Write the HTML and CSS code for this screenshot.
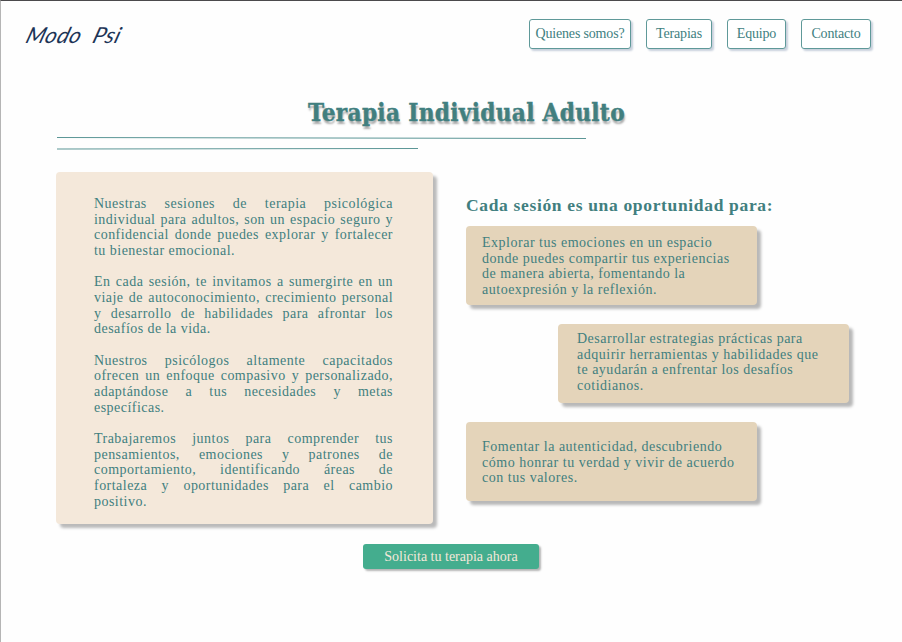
FILE: index.html
```html
<!DOCTYPE html>
<html lang="es">
<head>
<meta charset="utf-8">
<title>Modo Psi</title>
<link rel="stylesheet" href="styles.css">
</head>
<body>
<header class="header">
  <a class="logo"><span>Modo</span> <span>Psi</span></a>
  <nav class="nav">
    <a class="nav-somos"><span>Quienes somos?</span></a>
    <a class="nav-terapias"><span>Terapias</span></a>
    <a class="nav-equipo"><span>Equipo</span></a>
    <a class="nav-contacto"><span>Contacto</span></a>
  </nav>
</header>
<main>
  <h1>Terapia Individual Adulto</h1>
  <svg class="rules" width="532" height="16" viewBox="0 0 532 16" fill="none" stroke="#5b9696" stroke-width="1"><path d="M1 1.5L530 2.5M1 13L362 12.5"/></svg>
  <div class="columns">
    <section class="intro">
      <p>Nuestras sesiones de terapia psicológica<br>individual para adultos, son un espacio seguro y<br>confidencial donde puedes explorar y fortalecer<br><span class="last">tu bienestar emocional.</span></p>
      <p>En cada sesión, te invitamos a sumergirte en un<br>viaje de autoconocimiento, crecimiento personal<br>y desarrollo de habilidades para afrontar los<br><span class="last">desafíos de la vida.</span></p>
      <p>Nuestros psicólogos altamente capacitados<br>ofrecen un enfoque compasivo y personalizado,<br>adaptándose a tus necesidades y metas<br><span class="last">específicas.</span></p>
      <p>Trabajaremos juntos para comprender tus<br>pensamientos, emociones y patrones de<br>comportamiento, identificando áreas de<br>fortaleza y oportunidades para el cambio<br><span class="last">positivo.</span></p>
    </section>
    <section class="benefits">
      <h2>Cada sesión es una oportunidad para:</h2>
      <div class="card card-first">Explorar tus emociones en un espacio<br>donde puedes compartir tus experiencias<br>de manera abierta, fomentando la<br>autoexpresión y la reflexión.</div>
      <div class="card card-second">Desarrollar estrategias prácticas para<br>adquirir herramientas y habilidades que<br>te ayudarán a enfrentar los desafíos<br>cotidianos.</div>
      <div class="card card-third">Fomentar la autenticidad, descubriendo<br>cómo honrar tu verdad y vivir de acuerdo<br>con tus valores.</div>
    </section>
  </div>
  <a class="cta"><span>Solicita tu terapia ahora</span></a>
</main>
</body>
</html>
```
FILE: styles.css
```css
* { box-sizing: border-box; }
body {
  margin: 0;
  height: 642px;
  overflow: hidden;
  background: #fefefe;
  border-top: 1px solid #4b4a4c;
  border-left: 1px solid #b5b5b5;
  color: #417f7f;
  font-family: "Liberation Serif", "Noto Serif", serif;
}
.header {
  display: flex;
  justify-content: space-between;
  align-items: flex-start;
  height: 96px;
  padding: 18px 31px 0 26px;
}
.logo {
  font: italic 400 22px/32px Lato, sans-serif;
  color: #1d3557;
  transform: skewX(-18deg);
  letter-spacing: .5px;
  word-spacing: 6px;
  white-space: nowrap;
}
.nav { display: flex; gap: 15px; }
.nav a {
  display: flex;
  justify-content: center;
  height: 30px;
  border: 1px solid #5f9999;
  border-radius: 3px;
  background: #fff;
  box-shadow: 2px 2px 2px #c8d0dc;
  font-size: 14px;
  letter-spacing: -.17px;
  line-height: 28px;
  white-space: nowrap;
}
.nav-somos { width: 102px; }
.nav-terapias { width: 66px; }
.nav-equipo { width: 59px; }
.nav-contacto { width: 70px; }
h1 {
  margin: 0 0 0 307px;
  height: 39px;
  font-family: "DejaVu Serif Condensed", "DejaVu Serif", serif;
  font-stretch: condensed;
  font-size: 24px;
  line-height: 32px;
  letter-spacing: .37px;
  -webkit-text-stroke: .4px #417f7f;
  text-shadow: 1px 3px 2px #aaa;
  white-space: nowrap;
}
.rules { display: block; margin-left: 55px; }
.columns { display: flex; margin: 20px 0 0 55px; height: 352px; }
.intro {
  width: 377px;
  height: 352px;
  padding: 24px 40px 0 38px;
  border-radius: 4px;
  background: #f4e8da;
  box-shadow: 4px 4px 3px #bababa;
}
.intro p {
  margin: 0 0 15.67px;
  font-size: 14px;
  line-height: 15.67px;
  letter-spacing: .47px;
  text-align: justify;
  text-align-last: justify;
  white-space: nowrap;
}
.last { display: block; text-align-last: left; }
.intro p br:has(+ .last) { display: none; }
.benefits { margin-left: 33px; width: 384px; }
h2 {
  margin: 24px 0 11px;
  height: 19px;
  font-size: 17.5px;
  line-height: 19px;
  letter-spacing: .66px;
  white-space: nowrap;
}
.card {
  width: 291px;
  height: 79px;
  padding: 9px 16px 0;
  border-radius: 4px;
  background: #e4d4ba;
  box-shadow: 4px 4px 3px #b8b8b8;
  font-size: 14px;
  line-height: 15.67px;
  letter-spacing: .51px;
  white-space: nowrap;
}
.card-second { margin: 19px 0 19px 92px; padding: 7px 19px 0; }
.card-third { padding-top: 17px; }
.cta {
  display: flex;
  justify-content: center;
  width: 176px;
  height: 25px;
  margin: 20px 0 0 362px;
  border-radius: 3px;
  background: #44ad8e;
  box-shadow: 2px 2px 2px #b5b5b5;
  color: #f4e8da;
  font-size: 14px;
  line-height: 25px;
  white-space: nowrap;
}
```
